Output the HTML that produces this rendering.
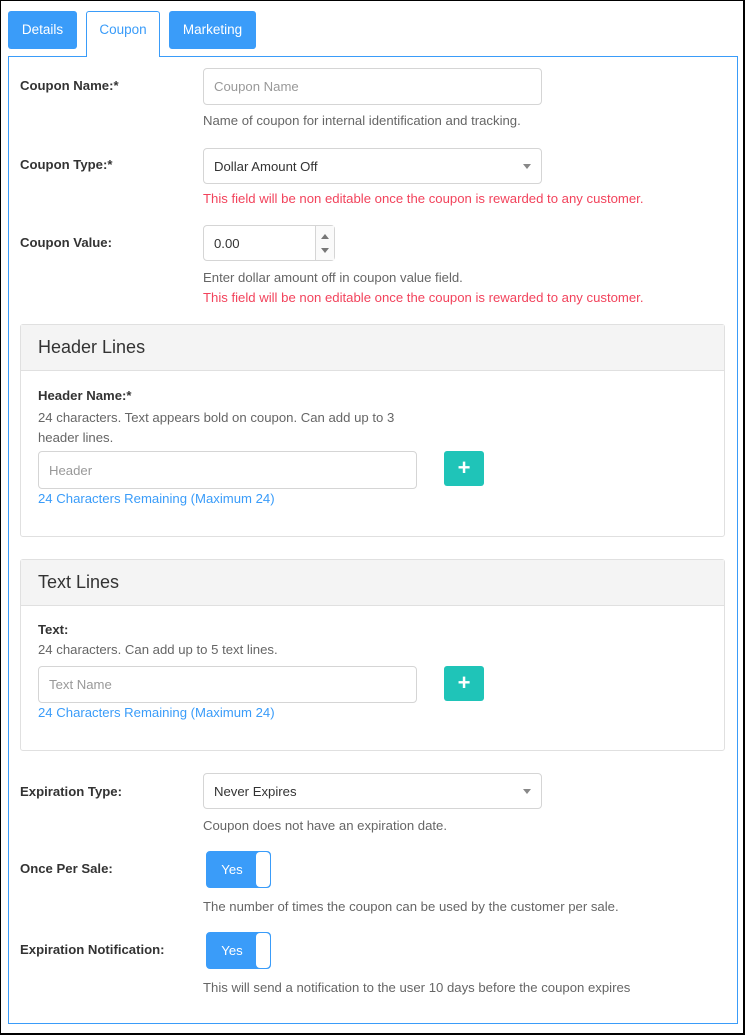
<!DOCTYPE html>
<html><head><style>
*{box-sizing:border-box;margin:0;padding:0}
body{width:745px;height:1035px;background:#fff;font-family:"Liberation Sans",Arial,sans-serif;font-size:13.15px;color:#333;position:relative;overflow:hidden}
.a{position:absolute}
.frame{left:0;top:0;width:745px;height:1035px;border:1px solid #000;border-right-width:2px;border-bottom-width:2px}
.tab{top:11px;height:38px;background:#3a9cf9;color:#fff;border-radius:3px;text-align:center;line-height:38px;font-size:13.5px}
.box{left:8px;top:56px;width:730px;height:968px;border:1px solid #3a9cf9}
.lbl{left:20px;font-weight:bold;color:#333}
.inp{border:1px solid #d5d5d5;border-radius:4px;background:#fff;padding-left:10px;display:flex;align-items:center}
.ph{color:#999}
.help{left:203px;color:#666}
.red{left:203px;color:#f2435c}
.car{position:absolute;right:10px;top:50%;margin-top:-2px;border-left:4px solid transparent;border-right:4px solid transparent;border-top:5px solid #888}
.panel{left:20px;width:705px;border:1px solid #e0e0e0;border-radius:3px}
.ph2{height:46px;background:#f4f4f4;border-bottom:1px solid #e0e0e0;font-size:18px;color:#333;padding-left:17px;line-height:45px}
.plus{width:40px;height:35px;background:#1fc4b8;border-radius:3px;color:#fff;font-size:22px;font-weight:bold;text-align:center;line-height:34px}
.link{color:#3a9cf9}
.tog{left:206px;width:65px;height:37px;border:1px solid #3a9cf9;border-radius:4px;background:#3a9cf9;overflow:hidden}
.tog span{position:absolute;left:0;top:0;width:50px;height:35px;line-height:35px;text-align:center;color:#fff}
.tog i{position:absolute;right:0;top:0;width:14px;height:35px;background:#fff;border-radius:4px}
</style></head><body>
<div class="a frame"></div>
<div class="a tab" style="left:8px;width:69px">Details</div>
<div class="a box"></div>
<div class="a" style="left:86px;top:11px;width:74px;height:46px;border:1px solid #3a9cf9;border-bottom:none;border-radius:3px 3px 0 0;background:#fff;color:#3a9cf9;text-align:center;line-height:36px;font-size:13.5px">Coupon</div>
<div class="a tab" style="left:169px;width:87px">Marketing</div>

<div class="a lbl" style="top:78px">Coupon Name:*</div>
<div class="a inp" style="left:203px;top:68px;width:339px;height:37px"><span class="ph">Coupon Name</span></div>
<div class="a help" style="top:113px">Name of coupon for internal identification and tracking.</div>

<div class="a lbl" style="top:157px">Coupon Type:*</div>
<div class="a inp" style="left:203px;top:148px;width:339px;height:36px">Dollar Amount Off<span class="car"></span></div>
<div class="a red" style="top:191px">This field will be non editable once the coupon is rewarded to any customer.</div>

<div class="a lbl" style="top:235px">Coupon Value:</div>
<div class="a inp" style="left:203px;top:225px;width:132px;height:36px">0.00
<div style="position:absolute;right:0;top:0;width:19px;height:34px;border-left:1px solid #d5d5d5;background:#fafafa">
<div style="position:absolute;left:5px;top:8px;border-left:4px solid transparent;border-right:4px solid transparent;border-bottom:5px solid #777"></div>
<div style="position:absolute;left:5px;top:22px;border-left:4px solid transparent;border-right:4px solid transparent;border-top:5px solid #777"></div>
</div></div>
<div class="a help" style="top:270px">Enter dollar amount off in coupon value field.</div>
<div class="a red" style="top:290px">This field will be non editable once the coupon is rewarded to any customer.</div>

<div class="a panel" style="top:324px;height:213px"><div class="ph2">Header Lines</div></div>
<div class="a" style="left:38px;top:388px;font-weight:bold">Header Name:*</div>
<div class="a" style="left:38px;top:408px;color:#666;line-height:20px;width:385px">24 characters. Text appears bold on coupon. Can add up to 3 header lines.</div>
<div class="a inp" style="left:38px;top:451px;width:379px;height:38px"><span class="ph">Header</span></div>
<div class="a plus" style="left:444px;top:451px">+</div>
<div class="a link" style="left:38px;top:491px">24 Characters Remaining (Maximum 24)</div>

<div class="a panel" style="top:559px;height:192px"><div class="ph2">Text Lines</div></div>
<div class="a" style="left:38px;top:622px;font-weight:bold">Text:</div>
<div class="a" style="left:38px;top:642px;color:#666">24 characters. Can add up to 5 text lines.</div>
<div class="a inp" style="left:38px;top:666px;width:379px;height:37px"><span class="ph">Text Name</span></div>
<div class="a plus" style="left:444px;top:666px">+</div>
<div class="a link" style="left:38px;top:705px">24 Characters Remaining (Maximum 24)</div>

<div class="a lbl" style="top:784px">Expiration Type:</div>
<div class="a inp" style="left:203px;top:773px;width:339px;height:36px">Never Expires<span class="car"></span></div>
<div class="a help" style="top:818px">Coupon does not have an expiration date.</div>

<div class="a lbl" style="top:861px">Once Per Sale:</div>
<div class="a tog" style="top:851px"><span>Yes</span><i></i></div>
<div class="a help" style="top:899px">The number of times the coupon can be used by the customer per sale.</div>

<div class="a lbl" style="top:942px">Expiration Notification:</div>
<div class="a tog" style="top:932px"><span>Yes</span><i></i></div>
<div class="a help" style="top:980px">This will send a notification to the user 10 days before the coupon expires</div>
</body></html>
